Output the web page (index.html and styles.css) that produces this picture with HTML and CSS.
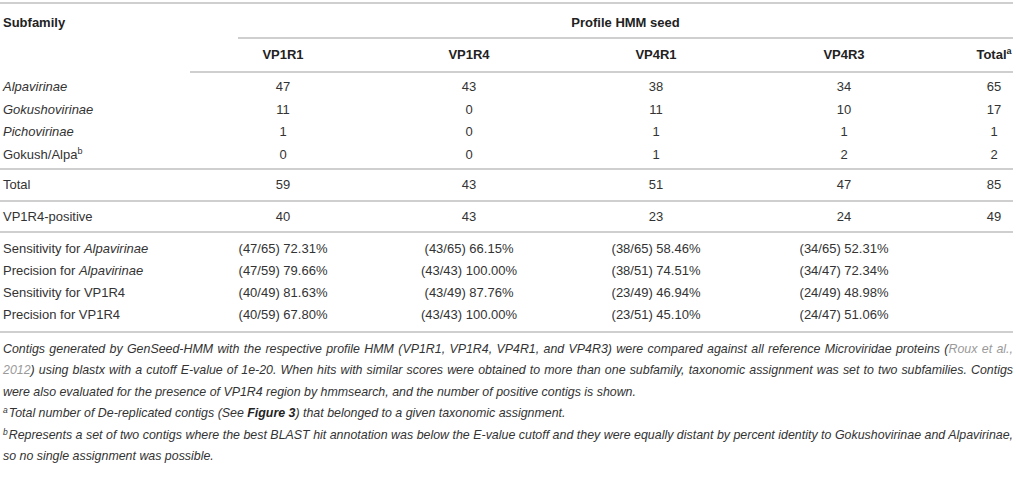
FILE: index.html
```html
<!DOCTYPE html>
<html lang="en">
<head>
    <meta charset="UTF-8">
    <meta name="viewport" content="width=device-width, initial-scale=1.0">
    <title>Profile HMM seed - Table</title>
    <link rel="stylesheet" href="styles.css">
</head>
<body>
    <div class="table-wrap">
        <table class="seed-table">
            <colgroup>
                <col class="col-name">
                <col class="col-val">
                <col class="col-val">
                <col class="col-val-wide">
                <col class="col-val-wide">
                <col class="col-total">
            </colgroup>
            <thead>
                <tr class="head-top">
                    <th rowspan="2" class="sub-head">Subfamily</th>
                    <th colspan="5" class="group-head"><div class="group-label">Profile HMM seed</div></th>
                </tr>
                <tr class="head-cols">
                    <th>VP1R1</th>
                    <th>VP1R4</th>
                    <th>VP4R1</th>
                    <th>VP4R3</th>
                    <th class="total">Total<sup>a</sup></th>
                </tr>
            </thead>

            <!-- counts per subfamily -->
            <tbody class="counts">
                <tr>
                    <td class="name"><i>Alpavirinae</i></td>
                    <td>47</td><td>43</td><td>38</td><td>34</td><td class="total">65</td>
                </tr>
                <tr>
                    <td class="name"><i>Gokushovirinae</i></td>
                    <td>11</td><td>0</td><td>11</td><td>10</td><td class="total">17</td>
                </tr>
                <tr>
                    <td class="name"><i>Pichovirinae</i></td>
                    <td>1</td><td>0</td><td>1</td><td>1</td><td class="total">1</td>
                </tr>
                <tr>
                    <td class="name">Gokush/Alpa<sup>b</sup></td>
                    <td>0</td><td>0</td><td>1</td><td>2</td><td class="total">2</td>
                </tr>
            </tbody>

            <tbody class="single single-total">
                <tr>
                    <td class="name">Total</td>
                    <td>59</td><td>43</td><td>51</td><td>47</td><td class="total">85</td>
                </tr>
            </tbody>

            <tbody class="single single-positive">
                <tr>
                    <td class="name">VP1R4-positive</td>
                    <td>40</td><td>43</td><td>23</td><td>24</td><td class="total">49</td>
                </tr>
            </tbody>

            <!-- sensitivity / precision -->
            <tbody class="rates">
                <tr>
                    <td class="name">Sensitivity for <i>Alpavirinae</i></td>
                    <td>(47/65) 72.31%</td><td>(43/65) 66.15%</td><td>(38/65) 58.46%</td><td>(34/65) 52.31%</td><td class="total"></td>
                </tr>
                <tr>
                    <td class="name">Precision for <i>Alpavirinae</i></td>
                    <td>(47/59) 79.66%</td><td>(43/43) 100.00%</td><td>(38/51) 74.51%</td><td>(34/47) 72.34%</td><td class="total"></td>
                </tr>
                <tr>
                    <td class="name">Sensitivity for VP1R4</td>
                    <td>(40/49) 81.63%</td><td>(43/49) 87.76%</td><td>(23/49) 46.94%</td><td>(24/49) 48.98%</td><td class="total"></td>
                </tr>
                <tr>
                    <td class="name">Precision for VP1R4</td>
                    <td>(40/59) 67.80%</td><td>(43/43) 100.00%</td><td>(23/51) 45.10%</td><td>(24/47) 51.06%</td><td class="total"></td>
                </tr>
            </tbody>
        </table>

        <div class="notes">
            <p>Contigs generated by GenSeed-HMM with the respective profile HMM (VP1R1, VP1R4, VP4R1, and VP4R3) were compared against all reference Microviridae proteins (<a href="#" class="ref">Roux et al., 2012</a>) using blastx with a cutoff E-value of 1e-20. When hits with similar scores were obtained to more than one subfamily, taxonomic assignment was set to two subfamilies. Contigs were also evaluated for the presence of VP1R4 region by hmmsearch, and the number of positive contigs is shown.</p>
            <p><sup>a</sup>Total number of De-replicated contigs (See <b>Figure 3</b>) that belonged to a given taxonomic assignment.</p>
            <p><sup>b</sup>Represents a set of two contigs where the best BLAST hit annotation was below the E-value cutoff and they were equally distant by percent identity to Gokushovirinae and Alpavirinae, so no single assignment was possible.</p>
        </div>
    </div>
</body>
</html>
```

FILE: styles.css
```css
body {
    margin: 0;
    background: #fff;
    color: #333;
    font-family: "Liberation Sans", Arial, Helvetica, sans-serif;
    font-size: 13px;
}
.table-wrap {
    width: 1016px;
    padding-top: 2px;
}
.seed-table {
    width: 1013px;
    border-collapse: collapse;
    table-layout: fixed;
    border-top: 2px solid #cfcfcf;
}
.col-name {
    width: 190px;
}
.col-val {
    width: 186px;
}
.col-val-wide {
    width: 188px;
}
.col-total {
    width: 75px;
}
th, td {
    padding: 0 3px;
    line-height: 22px;
    text-align: center;
    white-space: nowrap;
}
th {
    color: #222;
    font-weight: bold;
}
th.sub-head {
    text-align: left;
    vertical-align: top;
    padding-top: 10px;
    line-height: 18px;
}
th.group-head {
    padding: 10px 0 0 0;
    line-height: 18px;
}
.group-label {
    margin-left: 48px;
    padding-bottom: 5px;
    border-bottom: 2px solid #cfcfcf;
}
.head-cols th {
    padding-top: 7px;
    padding-bottom: 7px;
    line-height: 18px;
    border-bottom: 2px solid #cfcfcf;
}
td.name {
    text-align: left;
}
.total {
    padding-left: 37px;
    padding-right: 0;
}
sup {
    font-size: 9px;
    line-height: 0;
    vertical-align: 5px;
}
.counts td {
    line-height: 22.5px;
}
.counts tr:first-child td {
    padding-top: 3px;
}
.counts tr:last-child td {
    padding-bottom: 2px;
}
.single {
    border-top: 2px solid #cfcfcf;
}
.single-total td {
    padding-top: 4px;
    padding-bottom: 4px;
}
.single-positive td {
    padding-top: 4px;
    padding-bottom: 3px;
}
.rates {
    border-top: 2px solid #cfcfcf;
    border-bottom: 2px solid #cfcfcf;
}
.rates tr:first-child td {
    padding-top: 5px;
}
.rates tr:last-child td {
    padding-bottom: 5px;
}
.notes {
    margin-top: 6px;
    font-size: 12.4px;
    font-style: italic;
    line-height: 21.4px;
    text-align: justify;
}
.notes p {
    margin: 0;
    padding: 0 3px 0 3px;
}
.notes b {
    color: #222;
}
.notes sup {
    font-size: 8.5px;
    vertical-align: 4px;
    margin-right: 1px;
}
.ref {
    color: #9a9a9a;
    text-decoration: none;
}
```
